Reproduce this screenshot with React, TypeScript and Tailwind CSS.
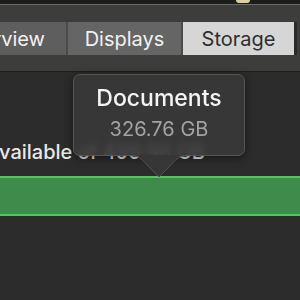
const TABS = [
  { label: 'Overview', w: 'w-[116px] ml-[-50px]', cls: 'bg-[#5e5e5e] text-[#f2f2f2] justify-end pr-[21px]' },
  { label: 'Displays', w: 'w-[115px]', cls: 'bg-[#656565] text-[#f2f2f2] justify-center' },
  { label: 'Storage', w: 'w-[113px]', cls: 'bg-[#d6d6d6] text-[#2e2e2e] justify-center' },
] as const

export default function App() {
  return (
    <div className="relative w-[300px] h-[300px] overflow-hidden bg-[#2c2c2c] font-['Inter','Liberation_Sans',sans-serif]">
      {/* window chrome */}
      <div className="h-[4px] bg-[#1c1c1c] flex">
        <div className="ml-[236px] w-[14px] h-[3px] rounded-b-full bg-[#d8cfa8]" />
      </div>
      <div className="h-px bg-[#6a6a6a]" />

      {/* tab bar */}
      <div className="h-[67px] bg-[#3d3d3c] pt-[17px] border-b border-[#1f1f1f]">
        <div className="flex h-[33px]">
          {TABS.map((t, i) => (
            <div
              key={t.label}
              className={`${t.w} ${t.cls} flex items-center text-[20px] leading-none ${i > 0 ? 'border-l-2 border-[#4a4a4a]' : ''}`}
            >
              {t.label}
            </div>
          ))}
          <div className="w-[3px] bg-[#2a2a2a]" />
        </div>
      </div>

      {/* storage content */}
      <div className="pt-[69px]">
        <div className="ml-[-12px] text-[20px] leading-[22px] font-medium text-[#e8e8e8] whitespace-nowrap">
          available of 499.96 GB
        </div>
        <div className="mt-[13px] h-[40px] bg-[#3f8b4b] border-y-2 border-[#4dca57] flex items-center">
          <span className="ml-[-6px] text-[11px] text-[#d8e8d8]">s</span>
        </div>
      </div>

      {/* tooltip */}
      <div className="absolute left-[73px] top-[74px] w-[172px] h-[82px] rounded-[7px] bg-[#383838]/[0.9] backdrop-blur-[3px] border border-[#555555] shadow-[0_2px_8px_rgba(0,0,0,0.5)] flex flex-col items-center pt-[9px]">
        <div className="text-[23px] leading-[28px] font-medium text-[#f4f4f4]">Documents</div>
        <div className="mt-[6px] text-[20px] leading-[22px] text-[#a3a3a3]">326.76 GB</div>
      </div>
      <svg className="absolute left-[129px] top-[155px]" width="60" height="24" viewBox="0 0 60 24">
        <path d="M2 0 Q9 0 13 4 L30 22 L47 4 Q51 0 58 0 Z" fill="#363636" />
        <path d="M2 0.5 Q9 0.5 13 4.5 L30 22 L47 4.5 Q51 0.5 58 0.5" fill="none" stroke="#555555" strokeWidth="1" />
      </svg>
    </div>
  )
}
